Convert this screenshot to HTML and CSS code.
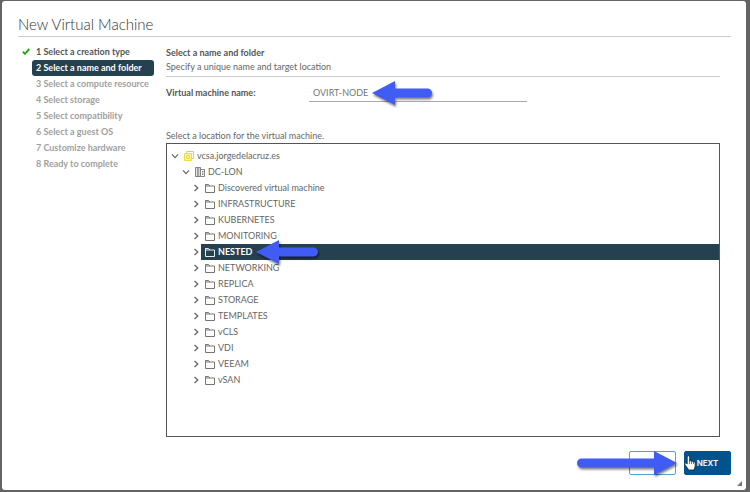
FILE: index.html
```html
<!DOCTYPE html>
<html lang="en">
<head>
    <meta charset="UTF-8">
    <meta name="viewport" content="width=device-width, initial-scale=1.0">
    <title>New Virtual Machine</title>
    <link rel="stylesheet" href="styles.css">
</head>
<body>

<!-- shared icons -->
<svg class="sprite" aria-hidden="true">
    <symbol id="right" viewBox="0 0 8 8"><path d="M2.5 1L5.8 4L2.5 7" fill="none" stroke="#666" stroke-width="1.3"/></symbol>
    <symbol id="down" viewBox="0 0 8 8"><path d="M1 2.3L4 5.6L7 2.3" fill="none" stroke="#666" stroke-width="1.2"/></symbol>
    <symbol id="folder" viewBox="0 0 10 10"><path d="M.5 9.5V1.5H3.6L4.9 3H9.5V9.5ZM.5 3H4.9" fill="none" stroke="currentColor" stroke-width=".9"/></symbol>
</svg>

<div class="modal" role="dialog" aria-labelledby="title">
    <h1 id="title">New Virtual Machine</h1>

    <div class="wizard">
        <ol class="steps">
            <li class="done">
                <svg class="check" viewBox="0 0 8 7"><path d="M.8 3.6L3 5.8L7.3 1" fill="none" stroke="#1faa10" stroke-width="1.9"/></svg>
                1 Select a creation type
            </li>
            <li class="active">2 Select a name and folder</li>
            <li>3 Select a compute resource</li>
            <li>4 Select storage</li>
            <li>5 Select compatibility</li>
            <li>6 Select a guest OS</li>
            <li>7 Customize hardware</li>
            <li>8 Ready to complete</li>
        </ol>

        <div class="page">
            <div class="page-header">
                <h2>Select a name and folder</h2>
                <p>Specify a unique name and target location</p>
            </div>

            <div class="field">
                <label for="vmName">Virtual machine name:</label>
                <div class="field-input">
                    <input type="text" id="vmName" name="vmName" value="OVIRT-NODE">
                    <svg class="arrow arrow-name" viewBox="0 0 62 24"><path d="M0 12L23 0V7.5H55.5A4.5 4.5 0 0 1 55.5 16.5H23V24Z"/></svg>
                </div>
            </div>

            <p class="hint">Select a location for the virtual machine.</p>
            <ul class="tree">
                <li class="level-1">
                    <svg class="chevron"><use href="#down"/></svg>
                    <span class="node">
                        <svg class="icon" viewBox="0 0 10 10"><path d="M2.5 2.5V.5H9.5V7.5H7.5" fill="none" stroke="#b5dd78"/><path d="M.5 2.5H7.5V9.5H.5Z" fill="#fff59b" stroke="#e9dc4a"/><path d="M2.7 4.7H5.3V7.3H2.7Z" fill="#fff" stroke="#f0b92c" stroke-width=".8"/></svg>
                        vcsa.jorgedelacruz.es
                    </span>
                </li>
                <li class="level-2">
                    <svg class="chevron"><use href="#down"/></svg>
                    <span class="node">
                        <svg class="icon" viewBox="0 0 10 10"><path d="M.5 9.5V.5H5.5V9.5ZM5.5 2.5H9.5V9.5H5.5M2.3 1V9.5M3.8 1V9.5M7 4.5H8.5M7 6H8.5M7 7.5H8.5" fill="none" stroke="#666" stroke-width=".8"/></svg>
                        DC-LON
                    </span>
                </li>
                <li><svg class="chevron"><use href="#right"/></svg><span class="node"><svg class="icon"><use href="#folder"/></svg>Discovered virtual machine</span></li>
                <li><svg class="chevron"><use href="#right"/></svg><span class="node"><svg class="icon"><use href="#folder"/></svg>INFRASTRUCTURE</span></li>
                <li><svg class="chevron"><use href="#right"/></svg><span class="node"><svg class="icon"><use href="#folder"/></svg>KUBERNETES</span></li>
                <li><svg class="chevron"><use href="#right"/></svg><span class="node"><svg class="icon"><use href="#folder"/></svg>MONITORING</span></li>
                <li>
                    <svg class="chevron"><use href="#right"/></svg>
                    <span class="node selected"><svg class="icon"><use href="#folder"/></svg>NESTED</span>
                    <svg class="arrow arrow-folder" viewBox="0 0 62 24"><path d="M0 12L23 0V7.5H57.5A4.5 4.5 0 0 1 57.5 16.5H23V24Z"/></svg>
                </li>
                <li><svg class="chevron"><use href="#right"/></svg><span class="node"><svg class="icon"><use href="#folder"/></svg>NETWORKING</span></li>
                <li><svg class="chevron"><use href="#right"/></svg><span class="node"><svg class="icon"><use href="#folder"/></svg>REPLICA</span></li>
                <li><svg class="chevron"><use href="#right"/></svg><span class="node"><svg class="icon"><use href="#folder"/></svg>STORAGE</span></li>
                <li><svg class="chevron"><use href="#right"/></svg><span class="node"><svg class="icon"><use href="#folder"/></svg>TEMPLATES</span></li>
                <li><svg class="chevron"><use href="#right"/></svg><span class="node"><svg class="icon"><use href="#folder"/></svg>vCLS</span></li>
                <li><svg class="chevron"><use href="#right"/></svg><span class="node"><svg class="icon"><use href="#folder"/></svg>VDI</span></li>
                <li><svg class="chevron"><use href="#right"/></svg><span class="node"><svg class="icon"><use href="#folder"/></svg>VEEAM</span></li>
                <li><svg class="chevron"><use href="#right"/></svg><span class="node"><svg class="icon"><use href="#folder"/></svg>vSAN</span></li>
            </ul>
        </div>
    </div>

    <div class="footer">
        <button type="button" class="btn">BACK</button>
        <button type="button" class="btn btn-primary">NEXT</button>
        <svg class="arrow arrow-next" viewBox="0 0 100 24"><path d="M100 12L77 0V7.5H4.5A4.5 4.5 0 0 0 4.5 16.5H77V24Z"/></svg>
        <svg class="cursor" viewBox="0 0 12 16"><path d="M3.2 9V2A1.2 1.2 0 0 1 5.6 2V6.2C6 5.6 7.3 5.7 7.5 6.5C8 6 9.2 6.2 9.4 7C10.3 6.7 11.2 7.2 11.2 8.2V11C11.2 12.5 10.2 13.3 10 15H4.4C4.2 13.3 1.8 11.2 .8 9.3C.5 8.2 1.8 7.6 2.5 8.4Z" fill="#fff" stroke="#222" stroke-width=".8"/><path d="M5.6 6.2V9M7.5 6.5V9M9.4 7V9" stroke="#222" stroke-width=".6"/></svg>
    </div>
    <svg class="grip" viewBox="0 0 6 6"><path d="M6 0V6H0Z" fill="#777"/></svg>
</div>

</body>
</html>
```
FILE: styles.css
```css
* {
    box-sizing: border-box;
    margin: 0;
    padding: 0;
}

body {
    min-height: 100vh;
    display: flex;
    padding: 1px 4px 2px 2px;
    background-color: #646464;
    font-family: Lato, "Open Sans", sans-serif;
    font-size: 9px;
    line-height: 14px;
    color: #666;
}

.sprite {
    position: absolute;
    width: 0;
    height: 0;
}

.modal {
    position: relative;
    flex: 1;
    display: flex;
    flex-direction: column;
    padding: 13px 15px 15px 16px;
    background-color: #fff;
    border-radius: 3px;
}

h1 {
    padding-bottom: 1px;
    border-bottom: 1px solid #ccc;
    font-size: 15px;
    font-weight: 300;
    line-height: 21px;
    color: #333;
}

.wizard {
    flex: 1;
    display: flex;
    padding: 6px 11px 0 0;
}

.steps {
    width: 136px;
    flex-shrink: 0;
    margin-right: 12px;
    padding-top: 1px;
    list-style: none;
    font-weight: 700;
    color: #a0a0a0;
}

.steps li {
    position: relative;
    height: 16px;
    margin-left: 14px;
    padding-left: 4px;
    line-height: 16px;
    border-radius: 3px;
    white-space: nowrap;
}

.steps .done {
    color: #555;
}

.steps .active {
    background-color: #25404f;
    color: #fff;
}

.check {
    position: absolute;
    left: -10px;
    top: 4px;
    width: 8px;
    height: 7px;
}

.page {
    flex: 1;
    min-width: 0;
    display: flex;
    flex-direction: column;
}

.page-header {
    padding: 3px 0 2px;
    border-bottom: 1px solid #ccc;
}

h2 {
    font-size: 9px;
    font-weight: 700;
    color: #555;
}

.field {
    display: flex;
    align-items: center;
    padding: 7px 0 27px;
}

.field label {
    width: 143px;
    font-weight: 700;
    color: #555;
}

.field-input {
    position: relative;
    width: 218px;
}

.field input {
    display: block;
    width: 100%;
    height: 18px;
    padding: 0 4px;
    border: none;
    border-bottom: 1px solid #aaa;
    background: none;
    font: inherit;
    color: #777;
}

.tree {
    flex: 1;
    padding: 4px 0;
    border: 1px solid #555;
    list-style: none;
}

.tree li {
    position: relative;
    display: flex;
    align-items: center;
    height: 16px;
    padding-left: 25px;
}

.tree .level-1 {
    padding-left: 4px;
}

.tree .level-2 {
    padding-left: 15px;
}

.chevron {
    width: 8px;
    height: 8px;
    margin-right: 1px;
}

.node {
    flex: 1;
    display: flex;
    align-items: center;
    gap: 3px;
    height: 16px;
    padding-left: 4px;
}

.node.selected {
    background-color: #25404f;
    font-weight: 700;
    color: #fff;
}

.icon {
    width: 10px;
    height: 10px;
}

.footer {
    position: relative;
    display: flex;
    justify-content: flex-end;
    gap: 8px;
    padding-top: 14px;
}

.btn {
    width: 47px;
    height: 24px;
    border: 1px solid #4fa3cf;
    border-radius: 2px;
    background-color: #fff;
    font: 600 8px Inter, sans-serif;
    color: #0072a3;
}

.btn-primary {
    border-color: #00538c;
    background-color: #00538c;
    color: #fff;
}

/* annotation arrows */
.arrow {
    position: absolute;
    z-index: 1;
    height: 24px;
    fill: #415cf5;
    filter: drop-shadow(1px 2px 1px rgba(0, 0, 0, 0.5));
}

.arrow-name {
    left: 63px;
    top: -3px;
    width: 62px;
}

.arrow-folder {
    left: 89px;
    top: -4px;
    width: 62px;
}

.arrow-next {
    right: 54px;
    bottom: 0;
    width: 100px;
}

.cursor {
    position: absolute;
    z-index: 2;
    right: 35px;
    bottom: 4px;
    width: 12px;
    height: 16px;
}

.grip {
    position: absolute;
    right: 4px;
    bottom: 4px;
    width: 5px;
    height: 5px;
}
```
